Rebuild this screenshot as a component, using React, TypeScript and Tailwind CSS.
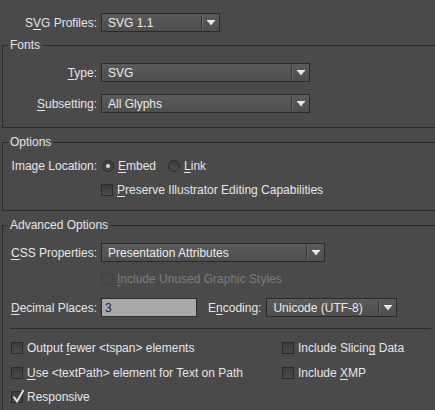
import React from 'react';

const Key: React.FC<{ children: React.ReactNode }> = ({ children }) => (
  <span className="underline underline-offset-2">{children}</span>
);

const Arrow = () => (
  <svg width="8" height="6" viewBox="0 0 8 6">
    <rect x="0" y="0" width="8" height="1.2" fill="#f0f0f0" />
    <polygon points="0.5,1 7.5,1 4,5.5" fill="#e4e4e4" />
  </svg>
);

interface SelectProps {
  value: string;
  className: string;
}

const Select: React.FC<SelectProps> = ({ value, className }) => (
  <div
    className={`${className} h-[19px] flex items-center border border-[#2a2a2a] bg-linear-to-b from-[#5b5b5b] to-[#4e4e4e] text-[#ececec]`}
  >
    <span className="flex-1 pl-[6px] whitespace-nowrap overflow-hidden">{value}</span>
    <span className="h-[13px] w-[2px] border-l border-[#333333] bg-[#6a6a6a]" />
    <span className="w-[16px] flex items-center justify-center">
      <Arrow />
    </span>
  </div>
);

const Checkbox: React.FC<{ checked?: boolean; disabled?: boolean }> = ({ checked, disabled }) => (
  <span
    className={`relative shrink-0 w-[12px] h-[12px] border ${
      disabled ? 'border-[#414141] bg-[#4a4a4a]' : 'border-[#2a2a2a] bg-linear-to-b from-[#3b3b3b] to-[#4a4a4a]'
    }`}
  >
    {checked && (
      <svg className="absolute left-[-1px] top-[-4px]" width="14" height="16" viewBox="0 0 14 16">
        <path d="M2.5 8.5 L6 13.5 L12.5 2" stroke="#e8e8e8" strokeWidth="1.8" fill="none" />
      </svg>
    )}
  </span>
);

const Radio: React.FC<{ checked?: boolean }> = ({ checked }) => (
  <span className="shrink-0 w-[12px] h-[12px] rounded-full border border-[#2a2a2a] bg-linear-to-b from-[#3b3b3b] to-[#4d4d4d] flex items-center justify-center">
    {checked && <span className="w-[4px] h-[4px] rounded-full bg-[#dcdcdc]" />}
  </span>
);

const Group: React.FC<{ title: string; className: string; children: React.ReactNode }> = ({
  title,
  className,
  children,
}) => (
  <fieldset className={`${className} ml-[2px] w-[460px] border border-[#2c2c2c]`}>
    <legend className="ml-[5px] px-[2px] leading-[14px]">{title}</legend>
    {children}
  </fieldset>
);

export default function App() {
  return (
    <div className="w-[435px] h-[410px] overflow-hidden bg-[#4a4a4a] text-[12px] leading-[14px] text-[#e6e6ea] font-['Liberation_Sans',Arial,sans-serif]">
      <div className="pt-[13px] flex items-center">
        <span className="w-[97px] text-right">
          S<Key>V</Key>G Profiles:
        </span>
        <Select value="SVG 1.1" className="ml-[4px] w-[119px]" />
      </div>

      <Group title="Fonts" className="mt-[6px] pb-[14px]">
        <div className="mt-[11px] flex items-center">
          <span className="w-[94px] text-right">
            <Key>T</Key>ype:
          </span>
          <Select value="SVG" className="ml-[4px] w-[209px]" />
        </div>
        <div className="mt-[12px] flex items-center">
          <span className="w-[94px] text-right">
            <Key>S</Key>ubsetting:
          </span>
          <Select value="All Glyphs" className="ml-[4px] w-[209px]" />
        </div>
      </Group>

      <Group title="Options" className="mt-[7px] pb-[11px]">
        <div className="mt-[8px] h-[18px] flex items-center">
          <span className="w-[94px] text-right">Image Location:</span>
          <span className="ml-[5px] flex items-center gap-[4px]">
            <Radio checked />
            <span>
              <Key>E</Key>mbed
            </span>
          </span>
          <span className="ml-[12px] flex items-center gap-[4px]">
            <Radio />
            <span>
              <Key>L</Key>ink
            </span>
          </span>
        </div>
        <div className="mt-[6px] h-[18px] flex items-center pl-[98px] gap-[4px]">
          <Checkbox />
          <span>
            <Key>P</Key>reserve Illustrator Editing Capabilities
          </span>
        </div>
      </Group>

      <Group title="Advanced Options" className="mt-[7px] pb-[20px]">
        <div className="mt-[11px] flex items-center">
          <span className="w-[94px] text-right">
            <Key>C</Key>SS Properties:
          </span>
          <Select value="Presentation Attributes" className="ml-[4px] w-[224px]" />
        </div>
        <div className="mt-[8px] h-[18px] flex items-center pl-[98px] gap-[4px] text-[#7d7d7d]">
          <Checkbox disabled />
          <span>
            <Key>I</Key>nclude Unused Graphic Styles
          </span>
        </div>
        <div className="mt-[10px] flex items-center">
          <span className="w-[94px] text-right">
            <Key>D</Key>ecimal Places:
          </span>
          <div className="ml-[4px] w-[96px] h-[19px] flex items-center border border-[#2c2c2c] bg-[#a9a9a9] pl-[3px] text-[#1b1b3d]">
            3
          </div>
          <span className="ml-[11px]">
            E<Key>n</Key>coding:
          </span>
          <Select value="Unicode (UTF-8)" className="ml-[5px] w-[131px]" />
        </div>
        <div className="mt-[11px] ml-[7px] w-[421px] h-px bg-[#2c2c2c]" />
        <div className="pl-[8px] grid grid-cols-[271px_1fr]">
          <div className="mt-[10px] h-[18px] flex items-center gap-[4px]">
            <Checkbox />
            <span>
              Output <Key>f</Key>ewer &lt;tspan&gt; elements
            </span>
          </div>
          <div className="mt-[10px] h-[18px] flex items-center gap-[4px]">
            <Checkbox />
            <span>
              Include Slicin<Key>g</Key> Data
            </span>
          </div>
          <div className="mt-[7px] h-[18px] flex items-center gap-[4px]">
            <Checkbox />
            <span>
              <Key>U</Key>se &lt;textPath&gt; element for Text on Path
            </span>
          </div>
          <div className="mt-[7px] h-[18px] flex items-center gap-[4px]">
            <Checkbox />
            <span>
              Include <Key>X</Key>MP
            </span>
          </div>
          <div className="mt-[6px] h-[18px] flex items-center gap-[4px]">
            <Checkbox checked />
            <span>Responsive</span>
          </div>
        </div>
      </Group>
    </div>
  );
}
